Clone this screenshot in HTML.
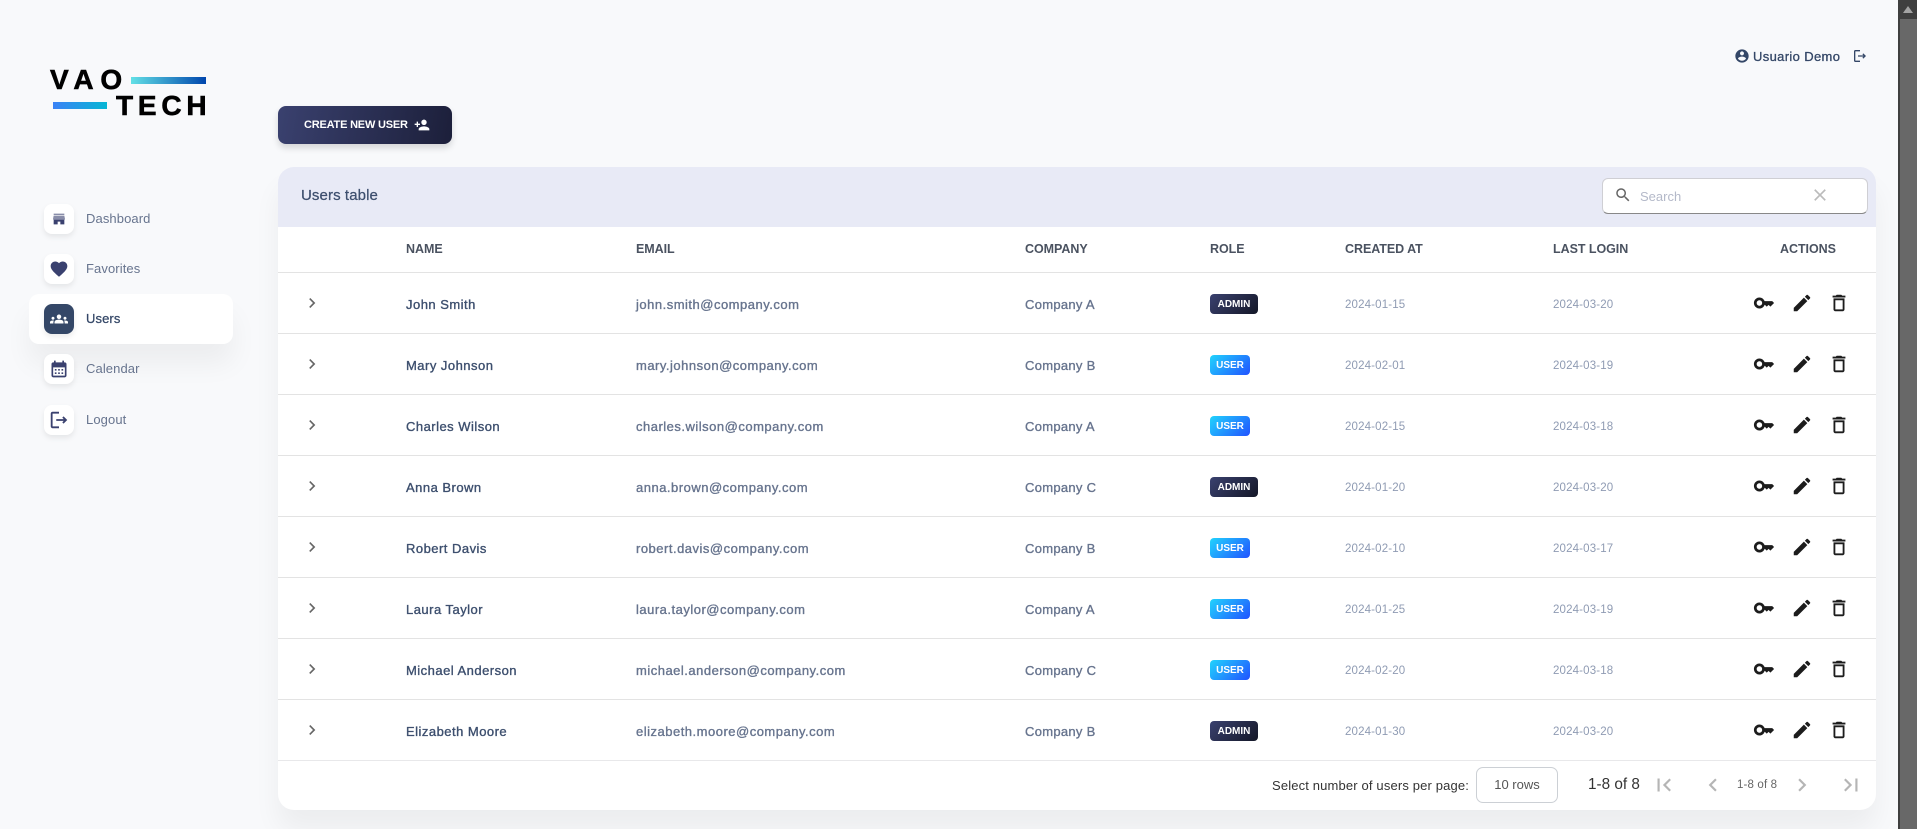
<!DOCTYPE html>
<html lang="en"><head><meta charset="utf-8"><title>Users</title>
<style>
html,body{margin:0;padding:0;width:1917px;height:829px;overflow:hidden;background:#f8f9fb;font-family:"Liberation Sans",sans-serif}
.a{position:absolute;white-space:nowrap}
svg{position:absolute;display:block}
.ib{position:absolute;left:44px;width:30px;height:30px;border-radius:8px;background:#fff;box-shadow:0 3px 6px rgba(0,0,0,.08)}
.nav{position:absolute;left:86px;font-size:13px;line-height:16px;color:#67748e;letter-spacing:.1px}
#card{position:absolute;left:278px;top:167px;width:1598px;height:643px;background:#fff;border-radius:16px;box-shadow:0 20px 27px rgba(0,0,0,.05)}
#band{position:absolute;left:278px;top:167px;width:1598px;height:60px;background:#e8eaf6;border-radius:16px 16px 0 0}
.h{position:absolute;top:241px;font-size:12.5px;line-height:16px;font-weight:700;color:#4a5260;letter-spacing:-.05px}
.row{position:absolute;left:278px;width:1598px;height:61px;border-top:1px solid #e3e3e3}
.row span{position:absolute;white-space:nowrap;top:24px;line-height:16px}
.n{left:128px;font-size:13px;color:#3d4f6e;-webkit-text-stroke:.35px #3d4f6e;letter-spacing:.48px}
.e{left:358px;font-size:13px;color:#67748e;-webkit-text-stroke:.35px #67748e;letter-spacing:.5px}
.c{left:747px;font-size:13px;color:#67748e;-webkit-text-stroke:.35px #67748e;letter-spacing:.3px}
.d{font-size:11.5px;color:#8f9bb3;letter-spacing:.15px}
.row .b{left:932px;top:21px;height:20px;line-height:21px;border-radius:4px;color:#fff;font-size:10px;font-weight:700;text-align:center}
.ad{width:48px;background:linear-gradient(135deg,#3a416f,#141727)}
.us{width:40px;background:linear-gradient(135deg,#21d4fd,#2152ff)}
</style></head><body>
<svg width="0" height="0" style="position:absolute"><defs>
<symbol id="key" viewBox="0 0 24 24"><path d="M21 10h-8.35C11.83 7.67 9.61 6 7 6c-3.31 0-6 2.69-6 6s2.69 6 6 6c2.61 0 4.83-1.67 5.65-4H13l2 2 2-2 2 2 4-4.04L21 10zM7 15c-1.65 0-3-1.35-3-3s1.35-3 3-3 3 1.35 3 3-1.35 3-3 3z"/></symbol>
<symbol id="edit" viewBox="0 0 24 24"><path d="M3 17.25V21h3.75L17.81 9.94l-3.75-3.75L3 17.25zM20.71 7.04c.39-.39.39-1.02 0-1.41l-2.34-2.34c-.39-.39-1.02-.39-1.41 0l-1.83 1.83 3.75 3.75 1.83-1.83z"/></symbol>
<symbol id="del" viewBox="0 0 24 24"><path d="M6 19c0 1.1.9 2 2 2h8c1.1 0 2-.9 2-2V7H6v12zM8 9h8v10H8V9zm7.5-5l-1-1h-5l-1 1H5v2h14V4z"/></symbol>
<symbol id="chev" viewBox="0 0 24 24"><path d="M10 6L8.59 7.41 13.17 12l-4.58 4.59L10 18l6-6z"/></symbol>
</defs></svg>

<!-- Logo -->
<div class="a" style="left:50px;top:61px;font-size:28px;line-height:38px;font-weight:700;letter-spacing:6.8px;color:#000;-webkit-text-stroke:.6px #000">VAO</div>
<div class="a" style="left:116px;top:87px;font-size:28px;line-height:38px;font-weight:700;letter-spacing:4.8px;color:#000;-webkit-text-stroke:.6px #000">TECH</div>
<div class="a" style="left:131px;top:77px;width:75px;height:7px;background:linear-gradient(90deg,#62e0e6,#0046ad)"></div>
<div class="a" style="left:53px;top:102px;width:54px;height:7px;background:linear-gradient(90deg,#3b82f6,#06b6d4)"></div>

<!-- Sidebar -->
<div class="a" style="left:29px;top:294px;width:204px;height:50px;background:#fff;border-radius:10px;box-shadow:0 20px 27px rgba(0,0,0,.05)"></div>
<div class="ib" style="top:204px"><svg style="left:7px;top:7px" width="16" height="16" viewBox="0 0 24 24" fill="#3a416f"><path opacity=".6" d="M20 4H4v2h16V4zM20 7H4l-1 5v1h18v-1z"/><path d="M4 13h16v7h-6v-4h-4v4H4z"/></svg></div>
<div class="nav" style="top:211px">Dashboard</div>
<div class="ib" style="top:254px"><svg style="left:5px;top:5px" width="20" height="20" viewBox="0 0 24 24" fill="#3a416f"><path d="M12 21.35l-1.45-1.32C5.4 15.36 2 12.28 2 8.5 2 5.42 4.42 3 7.5 3c1.74 0 3.41.81 4.5 2.09C13.09 3.81 14.76 3 16.5 3 19.58 3 22 5.42 22 8.5c0 3.78-3.4 6.86-8.55 11.54L12 21.35z"/></svg></div>
<div class="nav" style="top:261px">Favorites</div>
<div class="ib" style="top:304px;background:#344767"><svg style="left:6px;top:6px" width="18" height="18" viewBox="0 0 24 24" fill="#fff"><path d="M12 12.75c1.63 0 3.07.39 4.24.9 1.08.48 1.76 1.56 1.76 2.73V18H6v-1.61c0-1.18.68-2.26 1.76-2.73 1.17-.52 2.61-.91 4.24-.91zM4 13c1.1 0 2-.9 2-2s-.9-2-2-2-2 .9-2 2 .9 2 2 2zm1.13 1.1c-.37-.06-.74-.1-1.13-.1-.99 0-1.93.21-2.78.58C.48 14.9 0 15.62 0 16.43V18h4.5v-1.61c0-.83.23-1.61.63-2.29zM20 13c1.1 0 2-.9 2-2s-.9-2-2-2-2 .9-2 2 .9 2 2 2zm4 3.43c0-.81-.48-1.53-1.22-1.85-.85-.37-1.79-.58-2.78-.58-.39 0-.76.04-1.13.1.4.68.63 1.46.63 2.29V18H24v-1.57zM12 6c1.66 0 3 1.34 3 3s-1.34 3-3 3-3-1.34-3-3 1.34-3 3-3z"/></svg></div>
<div class="nav" style="top:311px;color:#344767;-webkit-text-stroke:.25px #344767">Users</div>
<div class="ib" style="top:354px"><svg style="left:5px;top:5px" width="20" height="20" viewBox="0 0 24 24" fill="#3a416f"><path d="M19 4h-1V2h-2v2H8V2H6v2H5c-1.11 0-1.99.9-1.99 2L3 20c0 1.1.89 2 2 2h14c1.1 0 2-.9 2-2V6c0-1.1-.9-2-2-2zm0 16H5V10h14v10zM9 14H7v-2h2v2zm4 0h-2v-2h2v2zm4 0h-2v-2h2v2zm-8 4H7v-2h2v2zm4 0h-2v-2h2v2zm4 0h-2v-2h2v2z"/></svg></div>
<div class="nav" style="top:361px">Calendar</div>
<div class="ib" style="top:405px"><svg style="left:4px;top:4px" width="22" height="22" viewBox="0 0 24 24" fill="#3a416f"><path d="M17 8l-1.41 1.41L17.17 11H9v2h8.17l-1.58 1.58L17 16l4-4zM5 5h7V3H5c-1.1 0-2 .9-2 2v14c0 1.1.9 2 2 2h7v-2H5V5z"/></svg></div>
<div class="nav" style="top:412px">Logout</div>

<!-- Top user -->
<svg style="left:1734px;top:48px" width="16" height="16" viewBox="0 0 24 24" fill="#344767"><path d="M12 2C6.48 2 2 6.48 2 12s4.48 10 10 10 10-4.48 10-10S17.52 2 12 2zm0 3c1.66 0 3 1.34 3 3s-1.34 3-3 3-3-1.34-3-3 1.34-3 3-3zm0 14.2c-2.5 0-4.71-1.28-6-3.22.03-1.99 4-3.08 6-3.08 1.99 0 5.97 1.09 6 3.08-1.29 1.94-3.5 3.22-6 3.22z"/></svg>
<div class="a" style="left:1753px;top:49px;font-size:13px;line-height:16px;color:#344767;-webkit-text-stroke:.3px #344767;letter-spacing:.35px">Usuario Demo</div>
<svg style="left:1852px;top:48px" width="16" height="16" viewBox="0 0 24 24" fill="#344767"><path d="M17 8l-1.41 1.41L17.17 11H9v2h8.17l-1.58 1.58L17 16l4-4zM5 5h7V3H5c-1.1 0-2 .9-2 2v14c0 1.1.9 2 2 2h7v-2H5V5z"/></svg>

<!-- Create button -->
<div class="a" style="left:278px;top:106px;width:174px;height:38px;border-radius:8px;background:linear-gradient(100deg,#3a416f,#1c1f3a);box-shadow:0 4px 7px rgba(0,0,0,.14)"></div>
<div class="a" style="left:304px;top:117px;font-size:11px;line-height:16px;font-weight:700;color:#fff;letter-spacing:-.2px">CREATE NEW USER</div>
<svg style="left:414px;top:117px" width="16" height="16" viewBox="0 0 24 24" fill="#fff"><path d="M15 12c2.21 0 4-1.79 4-4s-1.79-4-4-4-4 1.79-4 4 1.79 4 4 4zm-9-2V7H4v3H1v2h3v3h2v-3h3v-2H6zm9 4c-2.67 0-8 1.34-8 4v2h16v-2c0-2.66-5.33-4-8-4z"/></svg>

<!-- Table -->
<div id="card"></div>
<div id="band"></div>
<div class="a" style="left:301px;top:187px;font-size:15px;line-height:18px;color:#3d4f6e;-webkit-text-stroke:.25px #3d4f6e;letter-spacing:.1px">Users table</div>
<div class="a" style="left:1602px;top:178px;width:264px;height:34px;background:#fff;border:1px solid #cfcfd4;border-bottom:1px solid #888;border-radius:6px"></div>
<svg style="left:1614px;top:186px" width="18" height="18" viewBox="0 0 24 24" fill="#666"><path d="M15.5 14h-.79l-.28-.27C15.41 12.59 16 11.11 16 9.5 16 5.91 13.09 3 9.5 3S3 5.91 3 9.5 5.91 16 9.5 16c1.61 0 3.09-.59 4.23-1.57l.27.28v.79l5 4.99L20.49 19l-4.99-5zm-6 0C7.01 14 5 11.99 5 9.5S7.01 5 9.5 5 14 7.01 14 9.5 11.99 14 9.5 14z"/></svg>
<div class="a" style="left:1640px;top:188px;font-size:13px;line-height:17px;color:#b4b9c9">Search</div>
<svg style="left:1810px;top:185px" width="20" height="20" viewBox="0 0 24 24" fill="#bbb"><path d="M19 6.41L17.59 5 12 10.59 6.41 5 5 6.41 10.59 12 5 17.59 6.41 19 12 13.41 17.59 19 19 17.59 13.41 12 19 6.41z"/></svg>

<div class="h" style="left:406px">NAME</div>
<div class="h" style="left:636px">EMAIL</div>
<div class="h" style="left:1025px">COMPANY</div>
<div class="h" style="left:1210px">ROLE</div>
<div class="h" style="left:1345px">CREATED AT</div>
<div class="h" style="left:1553px">LAST LOGIN</div>
<div class="h" style="left:1780px">ACTIONS</div>

<div class="row" style="top:272px"><svg style="left:24px;top:20px" width="20" height="20" fill="#666"><use href="#chev"/></svg><span class="n">John Smith</span><span class="e">john.smith@company.com</span><span class="c">Company A</span><span class="b ad">ADMIN</span><span class="d" style="left:1067px">2024-01-15</span><span class="d" style="left:1275px">2024-03-20</span><svg style="left:1475px;top:19px" width="22" height="22" fill="#1c1c1c"><use href="#key"/></svg><svg style="left:1513px;top:19px" width="22" height="22" fill="#1c1c1c"><use href="#edit"/></svg><svg style="left:1550px;top:19px" width="22" height="22" fill="#1c1c1c"><use href="#del"/></svg></div>
<div class="row" style="top:333px"><svg style="left:24px;top:20px" width="20" height="20" fill="#666"><use href="#chev"/></svg><span class="n">Mary Johnson</span><span class="e">mary.johnson@company.com</span><span class="c">Company B</span><span class="b us">USER</span><span class="d" style="left:1067px">2024-02-01</span><span class="d" style="left:1275px">2024-03-19</span><svg style="left:1475px;top:19px" width="22" height="22" fill="#1c1c1c"><use href="#key"/></svg><svg style="left:1513px;top:19px" width="22" height="22" fill="#1c1c1c"><use href="#edit"/></svg><svg style="left:1550px;top:19px" width="22" height="22" fill="#1c1c1c"><use href="#del"/></svg></div>
<div class="row" style="top:394px"><svg style="left:24px;top:20px" width="20" height="20" fill="#666"><use href="#chev"/></svg><span class="n">Charles Wilson</span><span class="e">charles.wilson@company.com</span><span class="c">Company A</span><span class="b us">USER</span><span class="d" style="left:1067px">2024-02-15</span><span class="d" style="left:1275px">2024-03-18</span><svg style="left:1475px;top:19px" width="22" height="22" fill="#1c1c1c"><use href="#key"/></svg><svg style="left:1513px;top:19px" width="22" height="22" fill="#1c1c1c"><use href="#edit"/></svg><svg style="left:1550px;top:19px" width="22" height="22" fill="#1c1c1c"><use href="#del"/></svg></div>
<div class="row" style="top:455px"><svg style="left:24px;top:20px" width="20" height="20" fill="#666"><use href="#chev"/></svg><span class="n">Anna Brown</span><span class="e">anna.brown@company.com</span><span class="c">Company C</span><span class="b ad">ADMIN</span><span class="d" style="left:1067px">2024-01-20</span><span class="d" style="left:1275px">2024-03-20</span><svg style="left:1475px;top:19px" width="22" height="22" fill="#1c1c1c"><use href="#key"/></svg><svg style="left:1513px;top:19px" width="22" height="22" fill="#1c1c1c"><use href="#edit"/></svg><svg style="left:1550px;top:19px" width="22" height="22" fill="#1c1c1c"><use href="#del"/></svg></div>
<div class="row" style="top:516px"><svg style="left:24px;top:20px" width="20" height="20" fill="#666"><use href="#chev"/></svg><span class="n">Robert Davis</span><span class="e">robert.davis@company.com</span><span class="c">Company B</span><span class="b us">USER</span><span class="d" style="left:1067px">2024-02-10</span><span class="d" style="left:1275px">2024-03-17</span><svg style="left:1475px;top:19px" width="22" height="22" fill="#1c1c1c"><use href="#key"/></svg><svg style="left:1513px;top:19px" width="22" height="22" fill="#1c1c1c"><use href="#edit"/></svg><svg style="left:1550px;top:19px" width="22" height="22" fill="#1c1c1c"><use href="#del"/></svg></div>
<div class="row" style="top:577px"><svg style="left:24px;top:20px" width="20" height="20" fill="#666"><use href="#chev"/></svg><span class="n">Laura Taylor</span><span class="e">laura.taylor@company.com</span><span class="c">Company A</span><span class="b us">USER</span><span class="d" style="left:1067px">2024-01-25</span><span class="d" style="left:1275px">2024-03-19</span><svg style="left:1475px;top:19px" width="22" height="22" fill="#1c1c1c"><use href="#key"/></svg><svg style="left:1513px;top:19px" width="22" height="22" fill="#1c1c1c"><use href="#edit"/></svg><svg style="left:1550px;top:19px" width="22" height="22" fill="#1c1c1c"><use href="#del"/></svg></div>
<div class="row" style="top:638px"><svg style="left:24px;top:20px" width="20" height="20" fill="#666"><use href="#chev"/></svg><span class="n">Michael Anderson</span><span class="e">michael.anderson@company.com</span><span class="c">Company C</span><span class="b us">USER</span><span class="d" style="left:1067px">2024-02-20</span><span class="d" style="left:1275px">2024-03-18</span><svg style="left:1475px;top:19px" width="22" height="22" fill="#1c1c1c"><use href="#key"/></svg><svg style="left:1513px;top:19px" width="22" height="22" fill="#1c1c1c"><use href="#edit"/></svg><svg style="left:1550px;top:19px" width="22" height="22" fill="#1c1c1c"><use href="#del"/></svg></div>
<div class="row" style="top:699px"><svg style="left:24px;top:20px" width="20" height="20" fill="#666"><use href="#chev"/></svg><span class="n">Elizabeth Moore</span><span class="e">elizabeth.moore@company.com</span><span class="c">Company B</span><span class="b ad">ADMIN</span><span class="d" style="left:1067px">2024-01-30</span><span class="d" style="left:1275px">2024-03-20</span><svg style="left:1475px;top:19px" width="22" height="22" fill="#1c1c1c"><use href="#key"/></svg><svg style="left:1513px;top:19px" width="22" height="22" fill="#1c1c1c"><use href="#edit"/></svg><svg style="left:1550px;top:19px" width="22" height="22" fill="#1c1c1c"><use href="#del"/></svg></div>
<div class="a" style="left:278px;top:760px;width:1598px;height:1px;background:#e8e8ea"></div>

<!-- Footer -->
<div class="a" style="left:1272px;top:777px;font-size:13px;line-height:17px;color:#333;letter-spacing:.15px">Select number of users per page:</div>
<div class="a" style="left:1476px;top:767px;width:80px;height:34px;border:1px solid #ccd0d5;border-radius:7px;text-align:center;font-size:13px;line-height:34px;color:#555">10 rows</div>
<div class="a" style="left:1588px;top:775px;font-size:15.3px;line-height:20px;color:#333">1-8 of 8</div>
<svg style="left:1651px;top:772px" width="26" height="26" viewBox="0 0 24 24" fill="#b5b5b5"><path d="M18.41 16.59L13.82 12l4.59-4.59L17 6l-6 6 6 6zM6 6h2v12H6z"/></svg>
<svg style="left:1700px;top:772px" width="26" height="26" viewBox="0 0 24 24" fill="#b5b5b5"><path d="M15.41 7.41L14 6l-6 6 6 6 1.41-1.41L10.83 12z"/></svg>
<div class="a" style="left:1737px;top:777px;font-size:11.5px;line-height:17px;color:#666;letter-spacing:.15px">1-8 of 8</div>
<svg style="left:1789px;top:772px" width="26" height="26" viewBox="0 0 24 24" fill="#b5b5b5"><path d="M10 6L8.59 7.41 13.17 12l-4.58 4.59L10 18l6-6z"/></svg>
<svg style="left:1838px;top:772px" width="26" height="26" viewBox="0 0 24 24" fill="#b5b5b5"><path d="M5.59 7.41L10.18 12l-4.59 4.59L7 18l6-6-6-6zM16 6h2v12h-2z"/></svg>

<!-- Scrollbar -->
<div class="a" style="left:1898px;top:0;width:19px;height:829px;background:#3f3f3f"></div>
<div class="a" style="left:1900px;top:19px;width:17px;height:810px;background:#686868"></div>
<svg style="left:1903px;top:6px" width="10" height="7" viewBox="0 0 10 7" fill="#a3a3a3"><path d="M5 0L10 7H0z"/></svg>
</body></html>
